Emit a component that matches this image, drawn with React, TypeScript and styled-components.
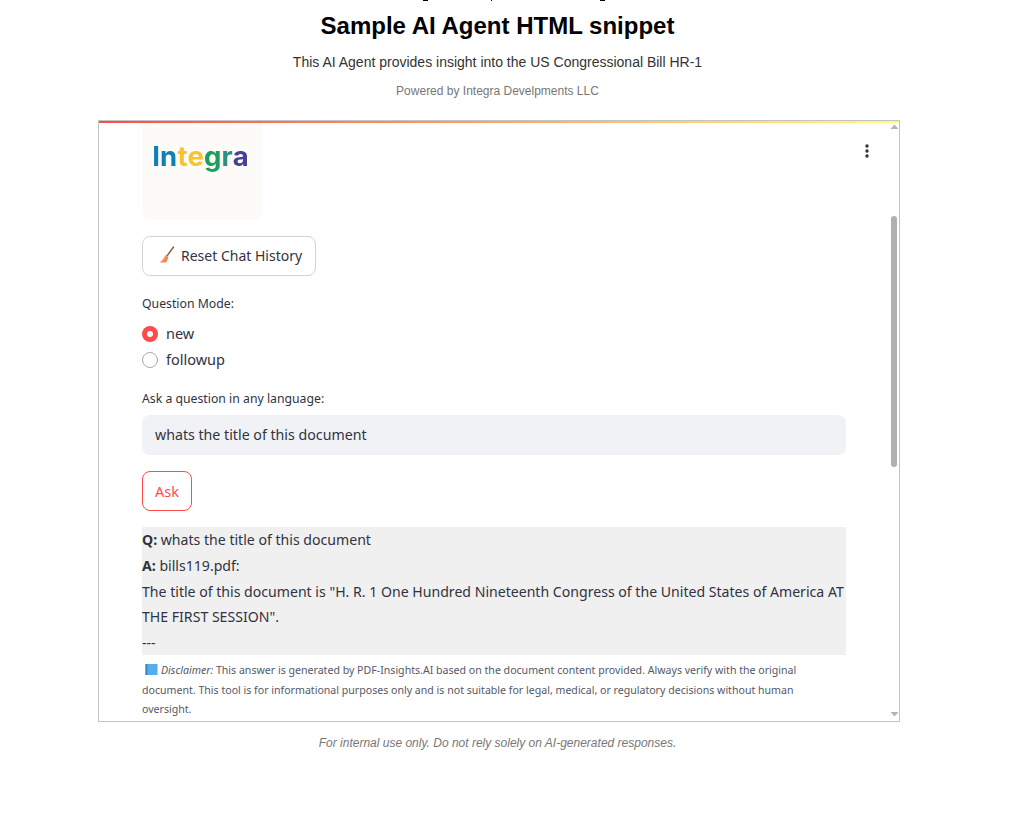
import React from 'react';
import styled, { createGlobalStyle } from 'styled-components';

const Global = createGlobalStyle`
    html, body {
        margin: 0;
        padding: 0;
        background: #fff;
    }
    body {
        font-family: "Liberation Sans", Arial, sans-serif;
        overflow: hidden;
    }
`

const Page = styled.div`
    width: 995px;
    height: 836px;
    padding-top: 12px;
    display: flex;
    flex-direction: column;
    align-items: center;
    overflow: hidden;
`

// descenders of a line scrolled off above the title
const ClippedLine = styled.svg`
    position: absolute;
    top: 0;
    left: 0;
`

const Title = styled.h1`
    margin: 0;
    font-size: 24px;
    line-height: 28px;
    font-weight: 700;
    color: #000;
`

const Subtitle = styled.p`
    margin: 13px 0 0;
    font-size: 14px;
    line-height: 18px;
    color: #333;
`

const Powered = styled.p`
    margin: 12px 0 0;
    font-size: 12px;
    line-height: 16px;
    color: #777;
`

const Frame = styled.div`
    margin-top: 21px;
    margin-left: 3px;
    width: 802px;
    height: 602px;
    box-sizing: border-box;
    border: 1px solid #c4c4c4;
    position: relative;
    background: #fff;
    overflow: hidden;
    font-family: "Noto Sans", sans-serif;
    color: #31333f;
`

const Rainbow = styled.div`
    position: absolute;
    top: 0;
    left: 0;
    right: 0;
    height: 2px;
    background: linear-gradient(90deg, #ff4b4b, #fffd80);
`

const Content = styled.div`
    padding: 0 53px 0 43px;
    display: flex;
    flex-direction: column;
    align-items: flex-start;
`

const LogoBox = styled.div`
    width: 120px;
    height: 99px;
    border-radius: 0 0 8px 8px;
    background: #fcfbf8;
    display: flex;
    justify-content: center;
    padding-top: 17px;
    box-sizing: border-box;
`

const LogoText = styled.div`
    margin-right: 3px;
    font-family: "Inter", sans-serif;
    font-size: 27.5px;
    line-height: 36px;
    font-weight: 700;
    letter-spacing: 0.2px;
    filter: blur(0.3px);
`

const LogoPart = styled.span<{ $color: string }>`
    color: ${p => p.$color};
`

const OutlineButton = styled.button<{ $accent?: boolean }>`
    height: 40px;
    padding: 0 12px;
    border-radius: 8px;
    border: 1px solid ${p => (p.$accent ? '#ff4b4b' : '#d3d4d8')};
    background: #fff;
    color: ${p => (p.$accent ? '#ff4b4b' : '#31333f')};
    font-family: "Noto Sans", sans-serif;
    font-size: 14.5px;
    display: flex;
    align-items: center;
    gap: 5px;
`

const ResetButton = styled(OutlineButton)`
    margin-top: 16px;
    padding: 0 13px 2px 15px;
    font-size: 14px;
`

const FieldLabel = styled.div<{ $top: number }>`
    margin-top: ${p => p.$top}px;
    font-size: 12.25px;
    line-height: 18px;
`

const RadioGroup = styled.div`
    margin-top: 11px;
    display: flex;
    flex-direction: column;
    gap: 6px;
`

const RadioRow = styled.div`
    height: 20px;
    display: flex;
    align-items: center;
    gap: 8px;
    font-size: 14.5px;
`

const RadioLabel = styled.span`
    margin-top: -2px;
`

const RadioDot = styled.span<{ $on?: boolean }>`
    width: 16px;
    height: 16px;
    border-radius: 50%;
    box-sizing: border-box;
    ${p => (p.$on
        ? 'background: #ff4b4b; display:flex; align-items:center; justify-content:center;'
        : 'border: 1px solid #a3a8b4; background: #fff;')}
    &::after {
        content: '';
        display: ${p => (p.$on ? 'block' : 'none')};
        width: 6px;
        height: 6px;
        border-radius: 50%;
        background: #fff;
    }
`

const TextField = styled.div`
    margin-top: 7px;
    width: 100%;
    height: 40px;
    box-sizing: border-box;
    padding: 0 13px 2px;
    background: #f0f2f6;
    border-radius: 8px;
    display: flex;
    align-items: center;
    font-size: 14.2px;
`

const AskButton = styled(OutlineButton)`
    margin-top: 16px;
`

const Answer = styled.div`
    margin-top: 16px;
    width: 100%;
    height: 128px;
    box-sizing: border-box;
    padding-top: 0.4px;
    background: #f0f0f0;
    font-size: 14.1px;
    line-height: 25.6px;
    overflow: hidden;
`

const Disclaimer = styled.div`
    margin-top: 6px;
    padding-right: 30px;
    font-size: 10.6px;
    line-height: 19.6px;
    color: #555865;
`

const Scrollbar = styled.div`
    position: absolute;
    top: 0;
    right: 0;
    bottom: 0;
    width: 10px;
    display: flex;
    flex-direction: column;
    align-items: center;
    justify-content: space-between;
    padding: 3px 0 4px;
    box-sizing: border-box;
`

const Thumb = styled.div`
    position: absolute;
    top: 95px;
    left: 2px;
    width: 6px;
    height: 251px;
    border-radius: 3px;
    background: #b0b0b4;
`

const MenuIcon = styled.svg`
    position: absolute;
    top: 23px;
    right: 30px;
`

const Footnote = styled.p`
    margin: 13px 0 0;
    font-size: 12px;
    line-height: 16px;
    font-style: italic;
    color: #777;
`

const Broom = () => (
    <svg width="18" height="18" viewBox="0 0 18 18">
        <path d="M15.5 1 L9 10" stroke="#8a5a4a" strokeWidth="1.4" strokeLinecap="round" />
        <path d="M7.5 9 L10.5 11.5 C9.5 14 9 15.5 8 16.5 L1.5 16.5 C4.5 14.5 6 12 7.5 9 Z" fill="#f58a5a" />
    </svg>
)

const Arrow = ({ up }: { up?: boolean }) => (
    <svg width="9" height="5" viewBox="0 0 9 5">
        <path d={up ? 'M0.5 5 L4.5 0.5 L8.5 5 Z' : 'M0.5 0 L4.5 4.5 L8.5 0 Z'} fill="#b4b4b4" />
    </svg>
)

const BookIcon = () => (
    <svg width="13" height="13" viewBox="0 0 13 13" style={{ verticalAlign: '-2px', margin: '0 3px 0 3px' }}>
        <rect x="0.5" y="1" width="12" height="11" fill="#55acee" />
        <rect x="0.5" y="1" width="2" height="11" fill="#3a86c0" />
    </svg>
)

export default function App() {
    return (
        <Page>
            <Global />
            <ClippedLine width="1035" height="2" viewBox="0 0 1035 2">
                <rect x="423" y="0" width="5" height="1" fill="#000" />
                <rect x="491" y="0" width="1" height="1" fill="#000" />
                <rect x="600" y="0" width="5" height="1" fill="#000" />
            </ClippedLine>
            <Title>Sample AI Agent HTML snippet</Title>
            <Subtitle>This AI Agent provides insight into the US Congressional Bill HR-1</Subtitle>
            <Powered>Powered by Integra Develpments LLC</Powered>
            <Frame>
                <Rainbow />
                <Content>
                    <LogoBox>
                        <LogoText>
                            <LogoPart $color="#0f7fb8">In</LogoPart>
                            <LogoPart $color="#f7c430">te</LogoPart>
                            <LogoPart $color="#1f9d5f">g</LogoPart>
                            <LogoPart $color="#2a8f85">r</LogoPart>
                            <LogoPart $color="#473f98">a</LogoPart>
                        </LogoText>
                    </LogoBox>
                    <ResetButton><Broom />Reset Chat History</ResetButton>
                    <FieldLabel $top={19}>Question Mode:</FieldLabel>
                    <RadioGroup>
                        <RadioRow><RadioDot $on /><RadioLabel>new</RadioLabel></RadioRow>
                        <RadioRow><RadioDot /><RadioLabel>followup</RadioLabel></RadioRow>
                    </RadioGroup>
                    <FieldLabel $top={20}>Ask a question in any language:</FieldLabel>
                    <TextField>whats the title of this document</TextField>
                    <AskButton $accent>Ask</AskButton>
                    <Answer>
                        <b>Q:</b> whats the title of this document<br />
                        <b>A:</b> bills119.pdf:<br />
                        The title of this document is "H. R. 1 One Hundred Nineteenth Congress of the United States of America AT THE FIRST SESSION".<br />
                        ---
                    </Answer>
                    <Disclaimer>
                        <BookIcon /><i>Disclaimer:</i> This answer is generated by PDF-Insights.AI based on the document content provided. Always verify with the original document. This tool is for informational purposes only and is not suitable for legal, medical, or regulatory decisions without human oversight.
                    </Disclaimer>
                </Content>
                <MenuIcon width="4" height="14" viewBox="0 0 4 14">
                    <circle cx="2" cy="2" r="1.7" fill="#31333f" />
                    <circle cx="2" cy="7" r="1.7" fill="#31333f" />
                    <circle cx="2" cy="12" r="1.7" fill="#31333f" />
                </MenuIcon>
                <Scrollbar>
                    <Arrow up />
                    <Thumb />
                    <Arrow />
                </Scrollbar>
            </Frame>
            <Footnote>For internal use only. Do not rely solely on AI-generated responses.</Footnote>
        </Page>
    );
}
